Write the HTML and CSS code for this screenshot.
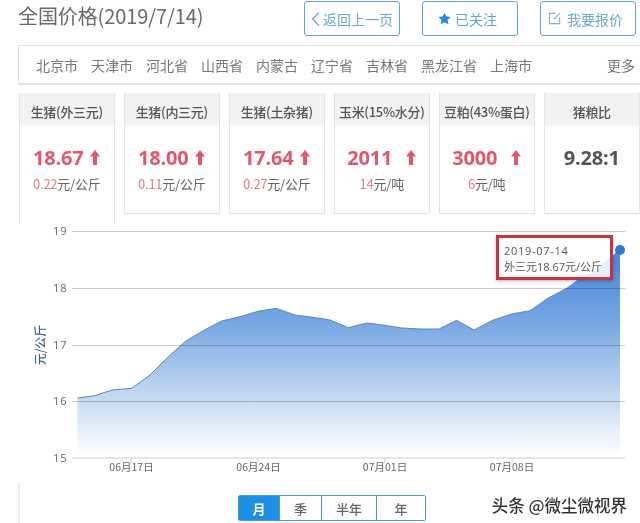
FILE: index.html
```html
<!DOCTYPE html>
<html lang="zh">
<head>
<meta charset="utf-8">
<title>全国价格</title>
<link rel="stylesheet" href="styles.css">
</head>
<body>
<div class="page">
  <header class="top">
    <h1 class="title">全国价格(2019/7/14)</h1>
    <nav class="actions">
      <a class="btn btn-back"><svg class="ico" width="9" height="16" viewBox="0 0 9 16"><path d="M8 1.5 1.5 8 8 14.5" fill="none" stroke="#6fa8c8" stroke-width="1.3"/></svg>返回上一页</a>
      <a class="btn btn-follow"><svg class="ico" width="13" height="13" viewBox="0 0 15 14"><path d="M7.5 0.3 9.7 4.8 14.6 5.4 11 8.8 12 13.7 7.5 11.3 3 13.7 4 8.8 0.4 5.4 5.3 4.8Z" fill="#1f8fd8"/></svg>已关注</a>
      <a class="btn btn-quote"><svg class="ico" width="13" height="13" viewBox="0 0 14 14"><path d="M8 1.5H1.5V12.5H12.5V6M12.5 1.5 6.5 8" fill="none" stroke="#7fb0cc" stroke-width="1.2"/></svg>我要报价</a>
    </nav>
  </header>

  <div class="regions">
    <span class="region">北京市</span>
    <span class="region">天津市</span>
    <span class="region">河北省</span>
    <span class="region">山西省</span>
    <span class="region">内蒙古</span>
    <span class="region">辽宁省</span>
    <span class="region">吉林省</span>
    <span class="region">黑龙江省</span>
    <span class="region">上海市</span>
    <span class="more">更多</span>
  </div>

  <section class="cards">
    <article class="card card-open">
      <h2 class="card-head">生猪(外三元)</h2>
      <div class="card-value"><b>18.67</b><svg class="arrow" width="10" height="16" viewBox="0 0 10 16"><path d="M5 0 10 6.5H7V15H3V6.5H0Z" fill="#e2586a"/></svg></div>
      <div class="card-delta"><em>0.22</em>元/公斤</div>
    </article>
    <article class="card">
      <h2 class="card-head">生猪(内三元)</h2>
      <div class="card-value"><b>18.00</b><svg class="arrow" width="10" height="16" viewBox="0 0 10 16"><path d="M5 0 10 6.5H7V15H3V6.5H0Z" fill="#e2586a"/></svg></div>
      <div class="card-delta"><em>0.11</em>元/公斤</div>
    </article>
    <article class="card">
      <h2 class="card-head">生猪(土杂猪)</h2>
      <div class="card-value"><b>17.64</b><svg class="arrow" width="10" height="16" viewBox="0 0 10 16"><path d="M5 0 10 6.5H7V15H3V6.5H0Z" fill="#e2586a"/></svg></div>
      <div class="card-delta"><em>0.27</em>元/公斤</div>
    </article>
    <article class="card">
      <h2 class="card-head">玉米(15%水分)</h2>
      <div class="card-value card-value-wide"><b>2011</b><svg class="arrow" width="10" height="16" viewBox="0 0 10 16"><path d="M5 0 10 6.5H7V15H3V6.5H0Z" fill="#e2586a"/></svg></div>
      <div class="card-delta"><em>14</em>元/吨</div>
    </article>
    <article class="card">
      <h2 class="card-head">豆粕(43%蛋白)</h2>
      <div class="card-value card-value-wide"><b>3000</b><svg class="arrow" width="10" height="16" viewBox="0 0 10 16"><path d="M5 0 10 6.5H7V15H3V6.5H0Z" fill="#e2586a"/></svg></div>
      <div class="card-delta"><em>6</em>元/吨</div>
    </article>
    <article class="card">
      <h2 class="card-head">猪粮比</h2>
      <div class="card-value card-value-plain"><b>9.28:1</b></div>
    </article>
  </section>

  <section class="chart">
    <svg class="chart-svg" width="640" height="258" viewBox="0 224 640 258">
      <defs>
        <linearGradient id="area" gradientUnits="userSpaceOnUse" x1="0" y1="250" x2="0" y2="456">
          <stop offset="0" stop-color="#4684d8"/>
          <stop offset="0.35" stop-color="#76a7e2"/>
          <stop offset="0.7" stop-color="#c2d7f1"/>
          <stop offset="1" stop-color="#ffffff"/>
        </linearGradient>
      </defs>
      <path class="area" d="M77.5 398 95 395.7 111.7 390 131.7 388.3 150 375 166.7 358.3 185 341.7 203 330.7 221.7 321 240 316.7 258 311.3 276 308.3 295 315 320 318.3 330 320 348.3 327.7 366.7 323 383 325 401.7 328 420 329 439 329 456.7 320.3 474 330 493.3 320 511.7 314 530 310.7 548.3 298 566.7 288.3 576.7 281 590 274 605 262 620 250V456H77.5Z"/>
      <path class="line" d="M77.5 398 95 395.7 111.7 390 131.7 388.3 150 375 166.7 358.3 185 341.7 203 330.7 221.7 321 240 316.7 258 311.3 276 308.3 295 315 320 318.3 330 320 348.3 327.7 366.7 323 383 325 401.7 328 420 329 439 329 456.7 320.3 474 330 493.3 320 511.7 314 530 310.7 548.3 298 566.7 288.3 576.7 281 590 274 605 262 620 250"/>
      <g class="grid">
        <path d="M72 231.5H625M72 288.5H625M72 345.5H625M72 401.5H625M72 458H625"/>
        <path d="M131 458V463M258 458V463M385 458V463M512 458V463"/>
      </g>
      <circle class="dot" cx="620" cy="250" r="5"/>
      <g class="axis-y">
        <text x="53" y="235">19</text>
        <text x="53" y="292">18</text>
        <text x="53" y="349">17</text>
        <text x="53" y="405">16</text>
        <text x="53" y="462">15</text>
      </g>
      <g class="axis-x">
        <text x="131.5" y="471">06月17日</text>
        <text x="258.5" y="471">06月24日</text>
        <text x="385" y="471">07月01日</text>
        <text x="512" y="471">07月08日</text>
      </g>
      <text class="axis-name" transform="translate(45 345) rotate(-90)">元/公斤</text>
    </svg>
    <div class="tooltip">
      <div class="tooltip-date">2019-07-14</div>
      <div>外三元18.67元/公斤</div>
    </div>
  </section>

  <footer class="bottom">
    <div class="range">
      <span class="range-item is-active">月</span>
      <span class="range-item">季</span>
      <span class="range-item range-wide">半年</span>
      <span class="range-item range-last">年</span>
    </div>
    <div class="mark">头条 @微尘微视界</div>
  </footer>
</div>
</body>
</html>
```

FILE: styles.css
```css
* { box-sizing: border-box; }
html, body { margin: 0; padding: 0; background: #fff; }
body { font-family: "Noto Sans CJK SC", "Liberation Sans", sans-serif; color: #666; }
.page { width: 640px; height: 523px; overflow: hidden; filter: blur(0.3px); }

.top { display: flex; height: 45px; padding: 1px 4px 0 18px; }
.title { margin: 1px 0 0; font-size: 20px; line-height: 28px; font-weight: 400; color: #6a6a6a; font-family: "Noto Sans CJK SC", sans-serif; letter-spacing: -0.1px; }
.actions { display: flex; gap: 22px; margin-left: auto; }
.btn { display: flex; align-items: center; justify-content: center; gap: 3px; width: 96px; height: 35px; border: 1px solid #62a3c0; border-radius: 3px; color: #6fa8cc; font-size: 14px; }
.btn-follow { gap: 4px; padding-right: 5px; color: #62a6d6; }
.btn-quote { gap: 6px; padding-right: 5px; }

.regions { display: flex; align-items: center; height: 40px; margin-left: 18px; padding: 0 5px 0 17px; border: 1px solid #e2e2e2; border-right: 0; border-bottom-width: 2px; font-size: 14px; color: #777; gap: 13px; }
.more { margin-left: auto; }

.cards { display: flex; align-items: flex-start; gap: 8.5px; margin: 8px 0 0 18.5px; height: 131px; }
.card { flex: none; width: 96.5px; height: 121px; border: 1px solid #e4e4e4; border-top: 0; text-align: center; }
.card-open { height: 131px; border-bottom: 0; }
.card-head { margin: 0; height: 34px; background: linear-gradient(#f2f2f2 85%, #f9f9f9); font-size: 13px; line-height: 37px; font-weight: 500; color: #555; white-space: nowrap; letter-spacing: -0.3px; }
.card-value { display: flex; align-items: center; justify-content: center; gap: 7px; height: 26px; margin-top: 18px; }
.card-value b { font: 700 20px/26px "Open Sans", "Liberation Sans", sans-serif; color: #e2586a; letter-spacing: -0.2px; }
.card-value-wide { gap: 14px; }
.card-value-plain b { color: #555; }
.card-delta { margin-top: 4px; font-size: 13px; line-height: 18px; color: #666; letter-spacing: -0.25px; }
.card-delta em { font-style: normal; color: #d9808c; }

.chart { position: relative; height: 258px; background: #fff; }
.chart-svg { display: block; }
.area { fill: url(#area); }
.line { fill: none; stroke: #5c86b8; stroke-width: 1; }
.grid path { fill: none; stroke: #000; stroke-opacity: 0.2; stroke-width: 1; }
.dot { fill: #2f78d2; }
.axis-y text { font: 11px "Open Sans", "Liberation Sans", sans-serif; fill: #666; letter-spacing: 1px; }
.axis-x text { font: 10.5px "Noto Sans CJK SC", sans-serif; fill: #666; text-anchor: middle; }
.axis-name { font: 500 12px "Noto Sans CJK SC", sans-serif; fill: #3d5f86; text-anchor: middle; }

.tooltip { position: absolute; left: 496px; top: 11px; width: 117px; height: 45px; padding: 5px 0 0 5px; border: 3px solid #c9323f; background: rgba(255, 255, 255, 0.86); box-shadow: 0 1px 3px rgba(0, 0, 0, 0.3); font: 11px/15.5px "Open Sans", "Noto Sans CJK SC", sans-serif; color: #555; white-space: nowrap; }
.tooltip-date { letter-spacing: 0.7px; }

.bottom { display: flex; align-items: flex-start; height: 41px; margin-left: 18px; padding: 13px 13px 0 218px; border-left: 2px solid #eee; }
.range { display: flex; flex: none; width: 188px; height: 26px; border: 1px solid #4a9fb8; border-radius: 2px; }
.range-item { display: flex; align-items: center; justify-content: center; flex: 0 0 42px; border-right: 1px solid #4a9fb8; font-size: 13px; font-weight: 500; color: #666; }
.range-wide { flex-basis: 55px; }
.range-last { flex: 1 1 auto; border-right: 0; }
.is-active { flex-basis: 41px; background: #1e8fe6; color: #fff; font-weight: 700; }
.mark { margin: -1px 0 0 auto; font-size: 16.5px; font-weight: 500; line-height: 22px; color: #333; white-space: nowrap; }
```
